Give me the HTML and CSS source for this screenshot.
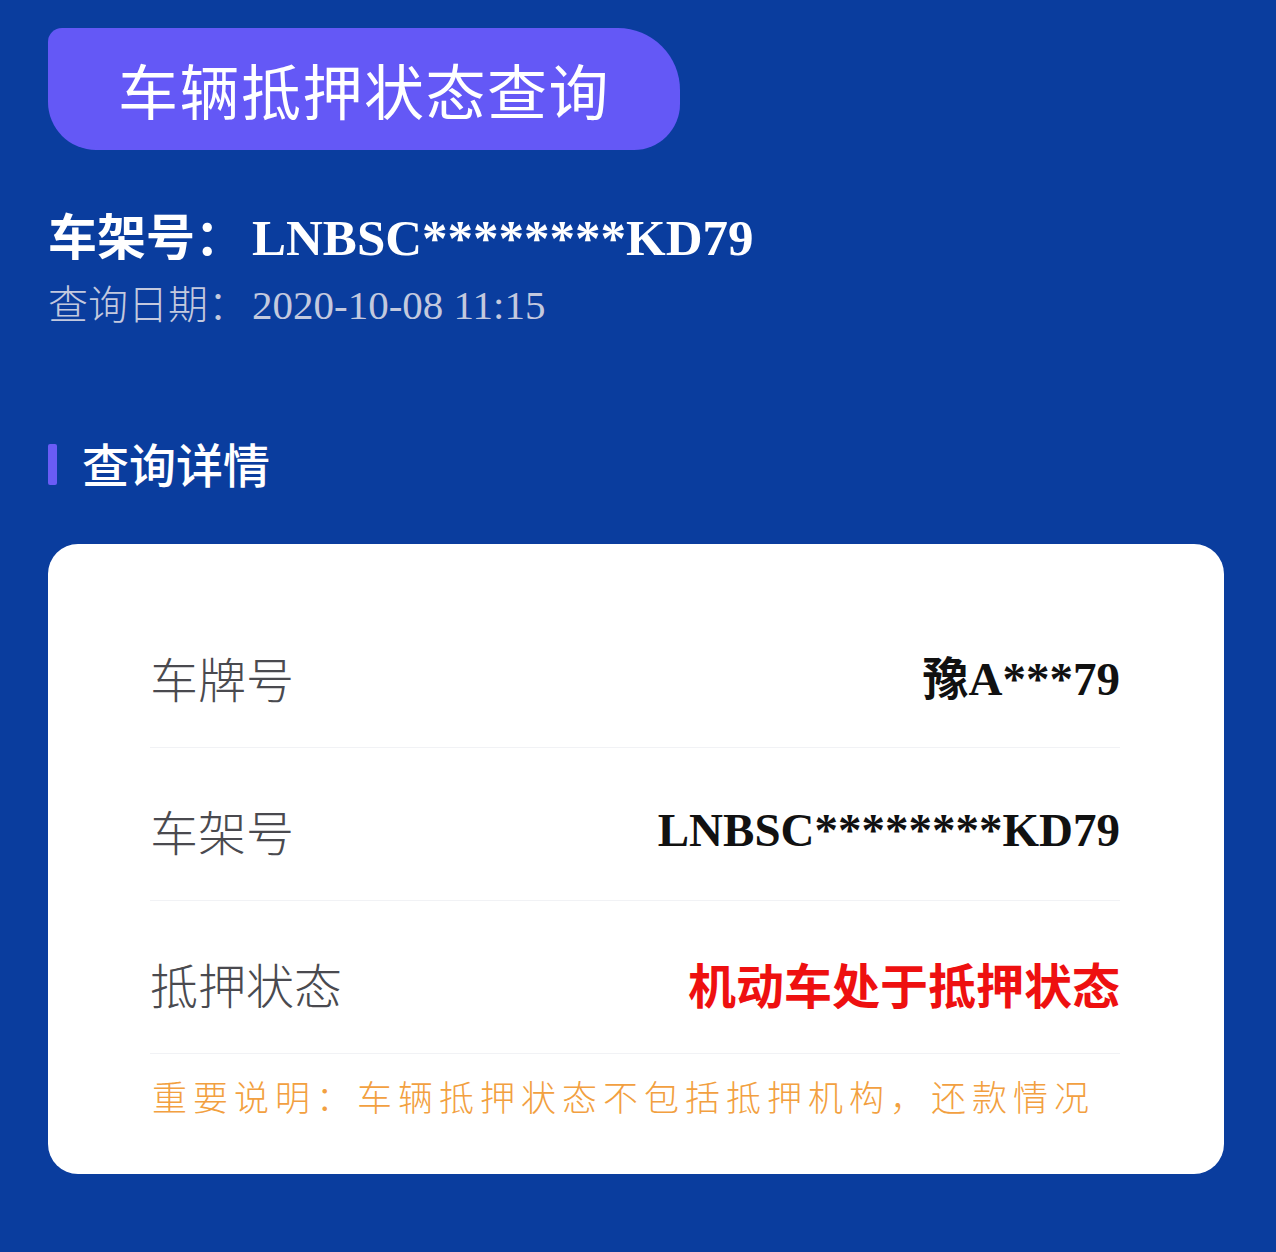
FILE: index.html
```html
<!DOCTYPE html>
<html lang="zh-CN">
<head>
<meta charset="utf-8">
<title>车辆抵押状态查询</title>
<link rel="stylesheet" href="styles.css">
</head>
<body>
<div class="page">
  <div class="pill">车辆抵押状态查询</div>
  <div class="vin-head"><span class="cjk">车架号：</span><span class="lat">LNBSC********KD79</span></div>
  <div class="date"><span class="cjk">查询日期：</span><span class="lat">2020-10-08 11:15</span></div>
  <div class="section"><span class="bar"></span><span class="section-title">查询详情</span></div>
  <div class="card">
    <div class="row first">
      <span class="label">车牌号</span>
      <span class="value"><span class="cjkb">豫</span><span class="latb">A***79</span></span>
    </div>
    <div class="row">
      <span class="label">车架号</span>
      <span class="value"><span class="latb">LNBSC********KD79</span></span>
    </div>
    <div class="row">
      <span class="label">抵押状态</span>
      <span class="value red">机动车处于抵押状态</span>
    </div>
    <div class="note">重要说明：车辆抵押状态不包括抵押机构，还款情况</div>
  </div>
</div>
</body>
</html>
```
FILE: styles.css
```css
html, body {
  margin: 0;
  padding: 0;
  background: #0a3d9e;
}
body {
  font-family: "Noto Sans CJK SC", "Noto Sans", sans-serif;
  width: 1276px;
  height: 1252px;
  overflow: hidden;
}
.page {
  padding: 28px 52px 0 48px;
  display: flex;
  flex-direction: column;
  align-items: flex-start;
}
.pill {
  width: 632px;
  height: 122px;
  box-sizing: border-box;
  padding-left: 70px;
  background: #6458f6;
  border-radius: 14px 62px 46px 48px;
  color: #ffffff;
  font-size: 60px;
  font-weight: 400;
  line-height: 122px;
  letter-spacing: 1.5px;
}
.vin-head {
  margin-top: 54px;
  display: flex;
  align-items: baseline;
  color: #ffffff;
  line-height: 60px;
  height: 60px;
}
.vin-head .cjk {
  font-size: 49px;
  font-weight: 700;
}
.vin-head .lat {
  font-family: "Liberation Serif", "Times New Roman", serif;
  font-weight: 700;
  font-size: 51px;
  margin-left: 8px;
}
.date {
  margin-top: 13px;
  display: flex;
  align-items: baseline;
  color: #c3c9de;
  line-height: 50px;
  height: 50px;
}
.date .cjk {
  font-size: 40px;
  font-weight: 300;
}
.date .lat {
  font-family: "Liberation Serif", "Times New Roman", serif;
  font-size: 41px;
  margin-left: 4px;
}
.section {
  margin-top: 108px;
  display: flex;
  align-items: center;
  height: 56px;
}
.bar {
  width: 9px;
  height: 41px;
  border-radius: 2px;
  background: #6a5cf6;
  margin-top: 3px;
}
.section-title {
  margin-left: 25px;
  color: #ffffff;
  font-size: 47px;
  font-weight: 500;
  line-height: 56px;
}
.card {
  margin-top: 53px;
  width: 1176px;
  box-sizing: border-box;
  background: #ffffff;
  border-radius: 30px;
  padding: 51px 104px 55px 102px;
  display: flex;
  flex-direction: column;
  align-self: stretch;
}
.row {
  display: flex;
  justify-content: space-between;
  align-items: center;
  padding: 52px 0 40px;
  border-bottom: 1px solid #f1f2f5;
  line-height: 60px;
  height: 60px;
}
.label {
  font-size: 48px;
  font-weight: 300;
  color: #4a4a4f;
}
.value {
  display: flex;
  align-items: baseline;
  color: #111111;
}
.cjkb {
  font-size: 46px;
  font-weight: 700;
}
.latb {
  font-family: "Liberation Serif", "Times New Roman", serif;
  font-weight: 700;
  font-size: 47px;
}
.red {
  color: #ee1010;
  font-size: 48px;
  font-weight: 700;
}
.note {
  padding-top: 19px;
  padding-left: 2px;
  color: #f2a040;
  font-size: 35px;
  font-weight: 300;
  line-height: 46px;
  letter-spacing: 6px;
  white-space: nowrap;
}
```
